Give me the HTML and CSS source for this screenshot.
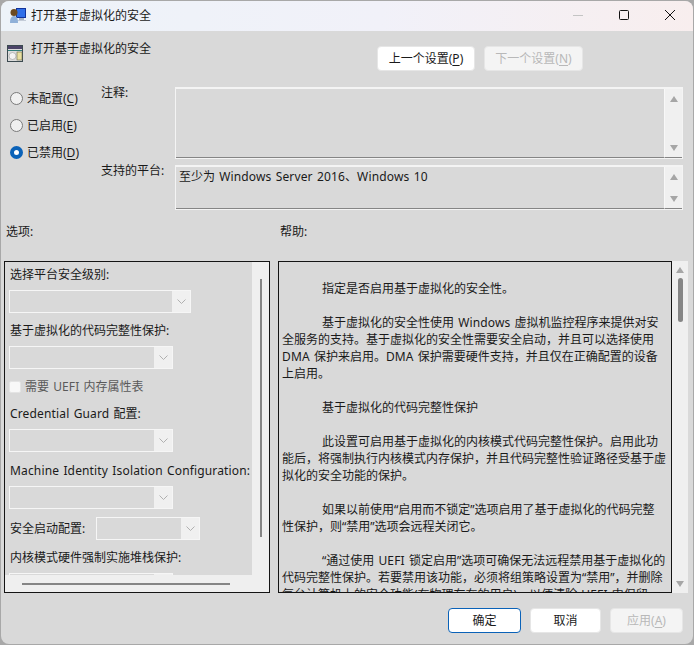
FILE: index.html
```html
<!DOCTYPE html>
<html lang="zh-CN">
<head>
<meta charset="utf-8">
<title>打开基于虚拟化的安全</title>
<link rel="stylesheet" href="styles.css">
</head>
<body>
<div class="window">
  <header class="titlebar">
    <svg class="title-icon" width="17" height="17" viewBox="0 0 17 17">
      <rect x="7" y="1" width="10" height="10" fill="#12339a"/>
      <rect x="8" y="2" width="8" height="8" fill="#2f6fe8"/>
      <rect x="10" y="11" width="5" height="2" fill="#a9b4c4"/>
      <rect x="8" y="13" width="9" height="1" fill="#c4ccd8"/>
      <circle cx="5" cy="5.500" r="3.500" fill="#6b4a20"/>
      <path d="M1 16c0-5 1.500-7 4-7s4 2 4 7z" fill="#8fb0d8"/>
    </svg>
    <span class="title-text">打开基于虚拟化的安全</span>
    <div class="win-controls">
      <svg class="win-btn" width="12" height="12" viewBox="0 0 12 12"><path d="M1 6.500h10" stroke="#c4c4c4" stroke-width="1"/></svg>
      <svg class="win-btn" width="12" height="12" viewBox="0 0 12 12"><rect x="1.500" y="1.500" width="9" height="9" rx="1" fill="none" stroke="#111" stroke-width="1"/></svg>
      <svg class="win-btn" width="12" height="12" viewBox="0 0 12 12"><path d="M1 1l10 10M11 1L1 11" stroke="#111" stroke-width="1"/></svg>
    </div>
  </header>

  <main class="content">
    <div class="head-row">
      <svg class="policy-icon" width="16" height="17" viewBox="0 0 16 17">
        <rect x="0.500" y="0.500" width="15" height="16" fill="#dcdcdc" stroke="#3c4a50"/>
        <rect x="1" y="1" width="14" height="3" fill="#4c4468"/>
        <rect x="1" y="5" width="14" height="1" fill="#2f7d78"/>
        <circle cx="5.500" cy="11" r="3.500" fill="#f3f3f3" stroke="#9a9a9a" stroke-width="0.600"/>
        <rect x="10" y="7" width="5" height="8" fill="#e8dfa0" stroke="#6b6b4a" stroke-width="0.600"/>
      </svg>
      <span class="policy-name">打开基于虚拟化的安全</span>
      <div class="nav-buttons">
        <button class="btn nav-btn prev">上一个设置(<u>P</u>)</button>
        <button class="btn nav-btn disabled">下一个设置(<u>N</u>)</button>
      </div>
    </div>

    <div class="settings">
      <div class="radios">
        <label class="radio-row"><span class="radio"></span><span>未配置(<u>C</u>)</span></label>
        <label class="radio-row"><span class="radio"></span><span>已启用(<u>E</u>)</span></label>
        <label class="radio-row"><span class="radio checked"></span><span>已禁用(<u>D</u>)</span></label>
      </div>
      <div class="fields">
        <span class="field-label">注释:</span>
        <div class="textbox">
          <div class="textbox-body"></div>
          <div class="mini-scroll"><span class="arrow up"></span><span class="arrow down"></span></div>
        </div>
        <span class="field-label">支持的平台:</span>
        <div class="textbox">
          <div class="textbox-body platform-text">至少为 <span class="lat">Windows Server 2016</span>、<span class="lat">Windows 10</span></div>
          <div class="mini-scroll"><span class="arrow up"></span><span class="arrow down"></span></div>
        </div>
      </div>
    </div>

    <div class="section-labels">
      <span class="section-options">选项:</span>
      <span>帮助:</span>
    </div>

    <div class="panes">
      <section class="options-pane">
        <div class="options-main">
          <div class="options-scroller">
            <div class="opt-label">选择平台安全级别:</div>
            <div class="combo wide"><span class="combo-arrow"><svg width="9" height="6" viewBox="0 0 9 6"><path d="M.5 .5l4 4 4-4" fill="none" stroke="#b0b0b0"/></svg></span></div>
            <div class="opt-label l2">基于虚拟化的代码完整性保护:</div>
            <div class="combo"><span class="combo-arrow"><svg width="9" height="6" viewBox="0 0 9 6"><path d="M.5 .5l4 4 4-4" fill="none" stroke="#b0b0b0"/></svg></span></div>
            <label class="check-row"><span class="checkbox"></span><span>需要 <span class="lat">UEFI</span> 内存属性表</span></label>
            <div class="opt-label l3"><span class="lat">Credential Guard</span> 配置:</div>
            <div class="combo"><span class="combo-arrow"><svg width="9" height="6" viewBox="0 0 9 6"><path d="M.5 .5l4 4 4-4" fill="none" stroke="#b0b0b0"/></svg></span></div>
            <div class="opt-label l4"><span class="lat">Machine Identity Isolation Configuration:</span></div>
            <div class="combo"><span class="combo-arrow"><svg width="9" height="6" viewBox="0 0 9 6"><path d="M.5 .5l4 4 4-4" fill="none" stroke="#b0b0b0"/></svg></span></div>
            <div class="inline-combo">
              <span>安全启动配置:</span>
              <div class="combo short"><span class="combo-arrow"><svg width="9" height="6" viewBox="0 0 9 6"><path d="M.5 .5l4 4 4-4" fill="none" stroke="#b0b0b0"/></svg></span></div>
            </div>
            <div class="opt-label l5">内核模式硬件强制实施堆栈保护:</div>
            <div class="combo"><span class="combo-arrow"></span></div>
          </div>
          <div class="v-track"><span class="v-thumb"></span></div>
        </div>
        <div class="h-track"><span class="h-thumb"></span></div>
      </section>

      <section class="help-pane">
        <div class="help-text">
          <p class="ind">指定是否启用基于虚拟化的安全性。</p>
          <p class="ind">基于虚拟化的安全性使用 <span class="lat">Windows</span> 虚拟机监控程序来提供对安<br><span class="noind">全服务的支持。基于虚拟化的安全性需要安全启动，并且可以选择使用</span><br><span class="noind"><span class="lat">DMA</span> 保护来启用。<span class="lat">DMA</span> 保护需要硬件支持，并且仅在正确配置的设备</span><br><span class="noind">上启用。</span></p>
          <p class="ind">基于虚拟化的代码完整性保护</p>
          <p class="ind">此设置可启用基于虚拟化的内核模式代码完整性保护。启用此功<br><span class="noind">能后，将强制执行内核模式内存保护，并且代码完整性验证路径受基于虚</span><br><span class="noind">拟化的安全功能的保护。</span></p>
          <p class="ind">如果以前使用“启用而不锁定”选项启用了基于虚拟化的代码完整<br><span class="noind">性保护，则“禁用”选项会远程关闭它。</span></p>
          <p class="ind">“通过使用 <span class="lat">UEFI</span> 锁定启用”选项可确保无法远程禁用基于虚拟化的<br><span class="noind">代码完整性保护。若要禁用该功能，必须将组策略设置为“禁用”，并删除</span><br><span class="noind">每台计算机上的安全功能(在物理存在的用户)，以便清除 <span class="lat">UEFI</span> 中保留</span></p>
        </div>
      </section>
      <div class="help-scroll">
        <span class="arrow up"></span>
        <span class="help-thumb"></span>
        <span class="arrow down bottom"></span>
      </div>
    </div>

    <div class="footer">
      <button class="btn foot-btn primary">确定</button>
      <button class="btn foot-btn cancel">取消</button>
      <button class="btn foot-btn disabled">应用(<u>A</u>)</button>
    </div>
  </main>
</div>
</body>
</html>
```
FILE: styles.css
```css
* { box-sizing: border-box; }
html, body { margin: 0; height: 645px; overflow: hidden; background: #a8a8a8; }
body { padding: 1px 0 0 1px; font: 12px/17px "Noto Sans", "Noto Sans CJK SC", sans-serif; color: #1a1a1a; word-spacing: 1px; }
u { text-underline-offset: 2px; }
.lat { letter-spacing: 0.15px; }

.window {
  width: 692px; height: 643px; background: #d9d9d9;
  border-radius: 8px; overflow: hidden; display: flex; flex-direction: column;
}
.titlebar {
  height: 30px; flex: none; display: flex; align-items: center; padding: 0 0 2px 8px;
  background: linear-gradient(90deg, #edf3f9 0%, #f1f1f9 55%, #f8eeee 100%);
}
.title-icon { flex: none; }
.title-text { margin-left: 5px; }
.win-controls { margin-left: auto; display: flex; align-items: center; gap: 34px; padding-right: 17px; }
.win-btn { display: block; }

.content { flex: 1; display: flex; flex-direction: column; padding: 0 5px 0 3px; min-height: 0; }

.head-row { display: flex; height: 41px; padding-top: 15px; align-items: flex-start; padding-left: 3px; }
.policy-icon { flex: none; margin-top: -1px; }
.policy-name { margin-left: 8px; margin-top: -4px; line-height: 14px; }
.nav-buttons { margin-left: auto; display: flex; gap: 9px; padding-right: 105px; }

.btn {
  font: inherit; color: #1a1a1a; background: #fff; border: 1px solid #e6e6e6;
  border-radius: 4px; padding: 0; height: 25px; white-space: nowrap;
}
.btn.disabled { background: #f4f4f4; color: #b8b8b8; }
.nav-btn { width: 99px; }
.nav-btn.prev { width: 98px; }

.settings { display: flex; height: 131px; margin-top: 18px; }
.radios { width: 97px; flex: none; display: flex; flex-direction: column; gap: 10px; padding: 0 0 0 6px; }
.radio-row { display: flex; align-items: center; gap: 4px; height: 17px; }
.radio { width: 13px; height: 13px; border: 1px solid #7a7a7a; border-radius: 50%; background: #f0f0f0; flex: none; }
.radio.checked { border: 4px solid #0a62b8; background: #fff; }

.fields {
  flex: 1; display: grid; grid-template-columns: 74px 508px; grid-template-rows: 72px 45px; row-gap: 6px;
  margin-top: -3px; align-self: flex-start;
}
.field-label { line-height: 14px; margin-top: -1px; }
.textbox { display: flex; border: 1px solid #f4f4f4; border-top-width: 2px; }
.textbox-body { flex: 1; border-bottom: 1px solid #858585; }
.platform-text { padding: 1px 0 0 3px; }
.mini-scroll {
  width: 18px; background: #f0f0f0; display: flex; flex-direction: column; justify-content: space-between;
  align-items: center; padding: 7px 0 6px; border-bottom: 1px solid #858585; border-left: 1px solid #f8f8f8;
}
.arrow { width: 0; height: 0; border-left: 4px solid transparent; border-right: 4px solid transparent; flex: none; display: block; }
.arrow.up { border-bottom: 6px solid #a6a6a6; }
.arrow.down { border-top: 6px solid #a6a6a6; }

.section-labels { display: flex; height: 20px; margin-top: 2px; padding-left: 2px; }
.section-options { width: 274px; }

.panes { display: flex; height: 332px; margin-top: 18px; }
.options-pane {
  width: 266px; flex: none; border: 1px solid #141414; display: flex; flex-direction: column;
}
.options-main { flex: 1; display: flex; min-height: 0; }
.options-scroller { flex: 1; min-width: 0; overflow: hidden; padding: 4px 0 0 4px; }
.opt-label { height: 17px; line-height: 17px; white-space: nowrap; padding-left: 1px; }
.opt-label.l2 { margin-top: 9px; }
.opt-label.l3 { margin-top: 10px; }
.opt-label.l4 { margin-top: 10px; }
.opt-label.l5 { margin-top: 9px; }
.combo {
  width: 164px; height: 23px; border: 1px solid #f6f6f6; display: flex; justify-content: flex-end; margin-top: 7px;
}
.combo.wide { width: 182px; }
.combo.short { width: 104px; margin-top: 0; }
.combo-arrow { width: 18px; background: #f0f0f0; display: flex; align-items: center; justify-content: center; }
.check-row { display: flex; align-items: center; gap: 4px; height: 17px; margin-top: 9px; color: #5a5a5a; }
.checkbox { width: 12px; height: 12px; border-radius: 2px; background: #f8f8f8; border: 1px solid #e4e4e4; flex: none; }
.inline-combo { display: flex; align-items: center; gap: 11px; margin-top: 8px; padding-left: 1px; }
.v-track { width: 17px; flex: none; background: #efefef; display: flex; justify-content: center; padding-top: 17px; }
.v-thumb { width: 2px; height: 258px; background: #858585; display: block; }
.h-track { height: 17px; flex: none; background: #efefef; display: flex; align-items: center; padding-left: 17px; }
.h-thumb { width: 208px; height: 2px; background: #858585; display: block; }

.help-pane { width: 394px; margin-left: 8px; flex: none; border: 1px solid #141414; overflow: hidden; }
.help-text { padding: 18px 2px 0 3px; white-space: nowrap; }
.help-text p { margin: 0 0 17px; }
.ind { text-indent: 40px; }
.noind { display: inline-block; text-indent: 0; }
.help-scroll { width: 16px; flex: none; background: #efefef; display: flex; flex-direction: column; align-items: center; padding: 6px 0; }
.help-thumb { width: 5px; height: 44px; border-radius: 3px; background: #858585; margin-top: 5px; display: block; }
.arrow.bottom { margin-top: auto; }

.footer { display: flex; justify-content: flex-end; gap: 9px; padding-right: 5px; margin-top: 15px; }
.foot-btn { width: 73px; }
.foot-btn.cancel { width: 71px; }
.foot-btn.primary { border: 1px solid #0a62b8; }
```
